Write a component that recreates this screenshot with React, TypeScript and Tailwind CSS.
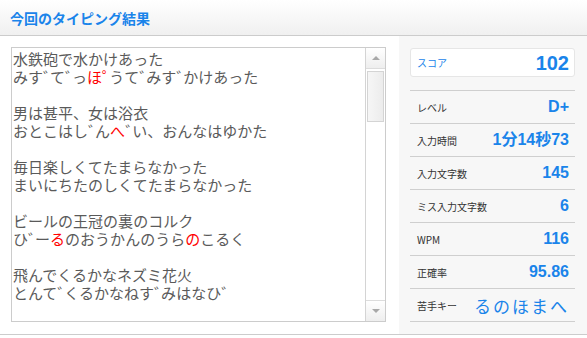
import React from 'react'

type Seg = { t: string; red?: boolean }

// reading lines keep the loose dakuten of the source text
const lines: Seg[][] = [
  [{ t: '水鉄砲で水かけあった' }],
  [{ t: 'みす゛て゛っ' }, { t: 'ほ゜', red: true }, { t: 'うて゛みす゛かけあった' }],
  [],
  [{ t: '男は甚平、女は浴衣' }],
  [{ t: 'おとこはし゛ん' }, { t: 'へ', red: true }, { t: '゛い、おんなはゆかた' }],
  [],
  [{ t: '毎日楽しくてたまらなかった' }],
  [{ t: 'まいにちたのしくてたまらなかった' }],
  [],
  [{ t: 'ビールの王冠の裏のコルク' }],
  [{ t: 'ひ゛ー' }, { t: 'る', red: true }, { t: 'のおうかんのうら' }, { t: 'の', red: true }, { t: 'こるく' }],
  [],
  [{ t: '飛んでくるかなネズミ花火' }],
  [{ t: 'とんて゛くるかなねす゛みはなひ゛' }],
  [],
]

const stats = [
  { label: 'レベル', value: 'D+' },
  { label: '入力時間', value: '1分14秒73' },
  { label: '入力文字数', value: '145' },
  { label: 'ミス入力文字数', value: '6' },
  { label: 'WPM', value: '116' },
  { label: '正確率', value: '95.86' },
]

function Kana({ t }: { t: string }) {
  return (
    <>
      {Array.from(t).map((c, i) =>
        c === '゛' || c === '゜' ? (
          <span key={i} className="tracking-[-8px]">{c}</span>
        ) : (
          <React.Fragment key={i}>{c}</React.Fragment>
        )
      )}
    </>
  )
}

export default function App() {
  return (
    <div className="w-[587px] h-[338px] bg-white overflow-hidden" style={{ fontFamily: '"Noto Sans CJK JP", sans-serif' }}>
      {/* ── Header ── */}
      <div className="h-[36px] border-b border-[#cccccc] bg-gradient-to-b from-white to-[#f0f0f0] flex items-center pl-[10px]">
        <div className="text-[14px] font-bold text-[#1a84ea] leading-none">今回のタイピング結果</div>
      </div>

      {/* ── Body ── */}
      <div className="flex h-[299px] border-b border-[#cccccc]">
        <div className="w-[399px] pl-[11px] pt-[11px] pr-[13px] pb-[12px]">
          <div className="h-[275px] border border-[#cccccc] flex bg-white">
            <div className="flex-1 overflow-hidden pl-[1px] pt-[2px] text-[15px] leading-[18px] text-[#5a5a5a] whitespace-pre">
              {lines.map((l, i) => (
                <div key={i} className="h-[18px]">
                  {l.map((s, j) => (
                    <span key={j} className={s.red ? 'text-[#ff0000]' : ''}>
                      <Kana t={s.t} />
                    </span>
                  ))}
                </div>
              ))}
            </div>
            {/* scrollbar */}
            <div className="w-[20px] border-l border-[#d4d4d4] flex flex-col">
              <div className="h-[21px] border-b border-[#dcdcdc] bg-gradient-to-b from-white to-[#eeeeee] flex items-center justify-center">
                <div className="w-0 h-0 border-l-[4px] border-r-[4px] border-b-[4px] border-l-transparent border-r-transparent border-b-[#a8a8a8]" />
              </div>
              <div className="mx-[1px] mt-[2px] h-[51px] border border-[#d4d4d4] bg-gradient-to-r from-[#f6f6f6] to-[#ececec]" />
              <div className="flex-1" />
              <div className="h-[21px] border-t border-[#dcdcdc] bg-gradient-to-b from-white to-[#eeeeee] flex items-center justify-center">
                <div className="w-0 h-0 border-l-[4px] border-r-[4px] border-t-[4px] border-l-transparent border-r-transparent border-t-[#a8a8a8]" />
              </div>
            </div>
          </div>
        </div>

        <div className="flex-1 bg-[#f7f7f7] pt-[12px] pl-[11px] pr-[12px]">
          <div className="h-[29px] bg-white border border-[#e6e6e6] rounded-[3px] flex items-center justify-between pl-[6px] pr-[5px]">
            <span className="text-[10px] text-[#1a84ea]">スコア</span>
            <span className="text-[20px] font-bold text-[#1a84ea] leading-none" style={{ fontFamily: '"Liberation Sans", Arial, sans-serif' }}>102</span>
          </div>
          <div className="mt-[13px] border-b border-[#cfcfcf]">
            {stats.map(s => (
              <div key={s.label} className="h-[33px] border-t border-[#cfcfcf] flex items-center justify-between pl-[7px] pr-[6px]">
                <span className="text-[10px] text-[#333333]">{s.label}</span>
                <span className="text-[16px] font-bold text-[#1a84ea] leading-none" style={{ fontFamily: '"Liberation Sans", "Noto Sans CJK JP", sans-serif' }}>{s.value}</span>
              </div>
            ))}
            <div className="h-[33px] border-t border-[#cfcfcf] flex items-center justify-between pl-[7px] pr-[6px]">
              <span className="text-[10px] text-[#333333]">苦手キー</span>
              <span className="text-[17px] text-[#1a84ea] tracking-[2px] leading-none">るのほまへ</span>
            </div>
          </div>
        </div>
      </div>
    </div>
  )
}
